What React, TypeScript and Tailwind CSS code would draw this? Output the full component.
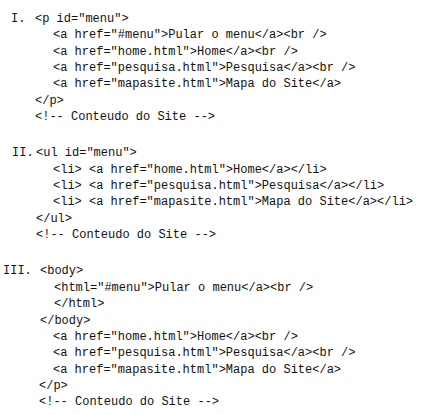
import React from "react";

type Line = { text: string; cls: string };

const Section = ({
  label,
  labelCls,
  bodyCls,
  lines,
}: {
  label: string;
  labelCls: string;
  bodyCls: string;
  lines: Line[];
}) => (
  <div className="flex">
    <div className={"whitespace-pre shrink-0 " + labelCls}>{label}</div>
    <div className={"flex flex-col " + bodyCls}>
      {lines.map((l, i) => (
        <div key={i} className={"whitespace-pre " + l.cls}>
          {l.text}
        </div>
      ))}
    </div>
  </div>
);

export default function App() {
  return (
    <div className="w-[429px] h-[415px] bg-white text-[#111] text-[12px] leading-[16.35px] pt-[11px] flex flex-col gap-[20px] overflow-hidden font-['Liberation_Mono','Courier_New',monospace]">
      <Section
        label="I."
        labelCls="pl-[11px] w-[35px]"
        bodyCls=""
        lines={[
          { text: '<p id="menu">', cls: "" },
          { text: '<a href="#menu">Pular o menu</a><br />', cls: "pl-[18px]" },
          { text: '<a href="home.html">Home</a><br />', cls: "pl-[18px]" },
          { text: '<a href="pesquisa.html">Pesquisa</a><br />', cls: "pl-[18px]" },
          { text: '<a href="mapasite.html">Mapa do Site</a>', cls: "pl-[18px]" },
          { text: "</p>", cls: "" },
          { text: "<!-- Conteudo do Site -->", cls: "" },
        ]}
      />
      <Section
        label="II."
        labelCls="pl-[12px] w-[36px]"
        bodyCls=""
        lines={[
          { text: '<ul id="menu">', cls: "" },
          { text: '<li> <a href="home.html">Home</a></li>', cls: "pl-[17px]" },
          { text: '<li> <a href="pesquisa.html">Pesquisa</a></li>', cls: "pl-[17px]" },
          { text: '<li> <a href="mapasite.html">Mapa do Site</a></li>', cls: "pl-[17px]" },
          { text: "</ul>", cls: "" },
          { text: "<!-- Conteudo do Site -->", cls: "" },
        ]}
      />
      <Section
        label="III."
        labelCls="pl-[3px] w-[39px]"
        bodyCls=""
        lines={[
          { text: "<body>", cls: "pl-[1px]" },
          { text: '<html="#menu">Pular o menu</a><br />', cls: "pl-[15px]" },
          { text: "</html>", cls: "pl-[15px]" },
          { text: "</body>", cls: "pl-[1px]" },
          { text: '<a href="home.html">Home</a><br />', cls: "pl-[14px]" },
          { text: '<a href="pesquisa.html">Pesquisa</a><br />', cls: "pl-[14px]" },
          { text: '<a href="mapasite.html">Mapa do Site</a>', cls: "pl-[14px]" },
          { text: "</p>", cls: "" },
          { text: "<!-- Conteudo do Site -->", cls: "" },
        ]}
      />
    </div>
  );
}
